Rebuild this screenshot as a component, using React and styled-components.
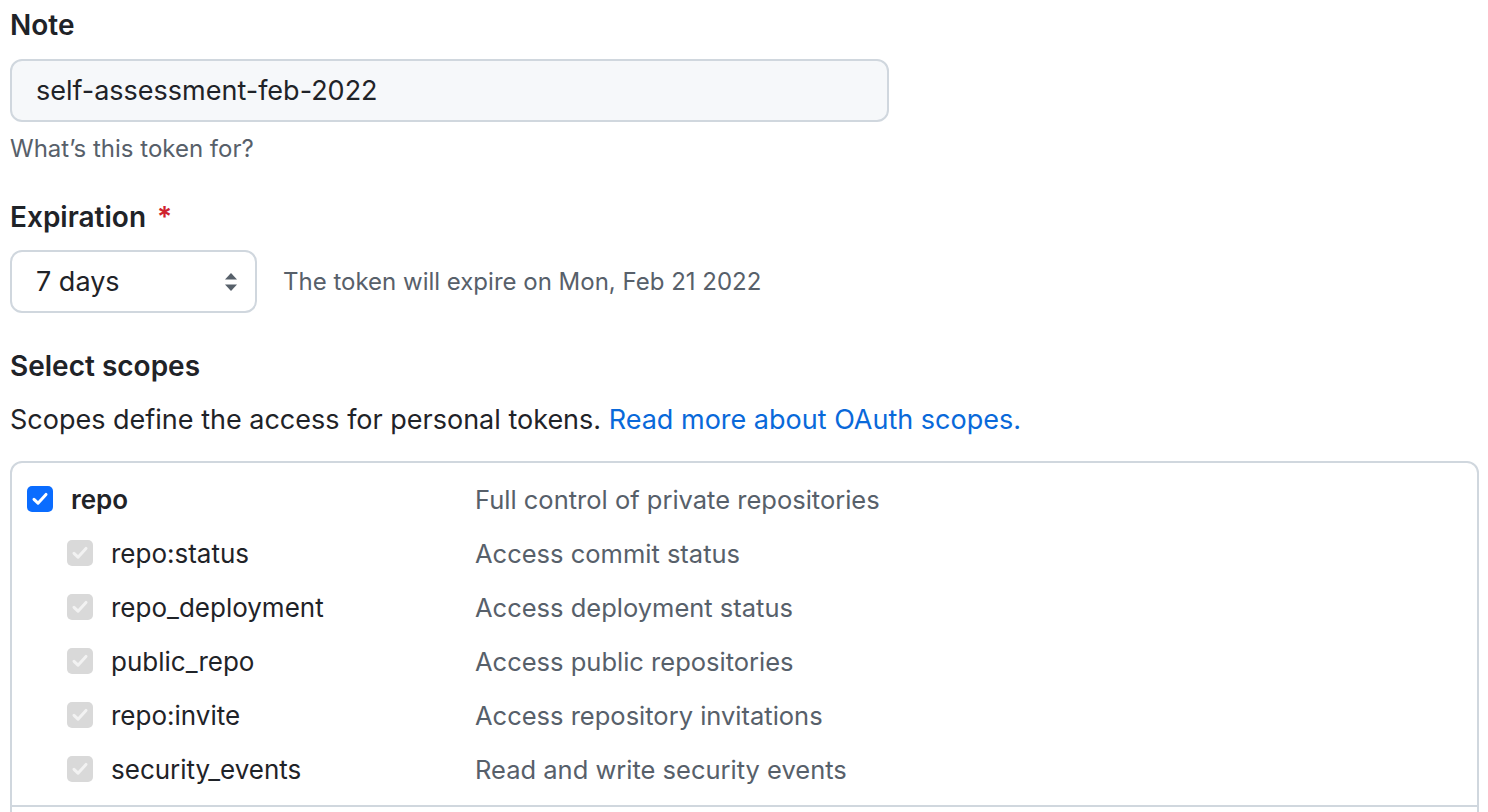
import React from 'react'
import styled, { createGlobalStyle } from 'styled-components'

const GlobalStyle = createGlobalStyle`
  html, body {
    margin: 0;
    padding: 0;
    background: #ffffff;
  }
  body {
    font-family: Inter, "Liberation Sans", Arial, sans-serif;
    color: #24292f;
  }
`

const scopes = [
  { name: 'repo:status', desc: 'Access commit status' },
  { name: 'repo_deployment', desc: 'Access deployment status' },
  { name: 'public_repo', desc: 'Access public repositories' },
  { name: 'repo:invite', desc: 'Access repository invitations' },
  { name: 'security_events', desc: 'Read and write security events' },
]

const CheckMark = ({ color }) => (
  <svg width="18" height="16" viewBox="0 0 18 16">
    <path d="M3 8.4 L7 12.2 L15 3.4" fill="none" stroke={color} strokeWidth="3" strokeLinecap="round" strokeLinejoin="round" />
  </svg>
)

const App = () => {
  return (
    <Page>
      <GlobalStyle />
      <FormGroup>
        <Label>Note</Label>
        <TextInput defaultValue="self-assessment-feb-2022" />
        <Hint>What’s this token for?</Hint>
      </FormGroup>

      <FormGroup>
        <Label>
          Expiration <Required>*</Required>
        </Label>
        <ExpirationRow>
          <Select>
            <span>7 days</span>
            <svg width="16" height="22" viewBox="0 0 16 22">
              <path d="M8 2 L14 8.5 L2 8.5 Z" fill="#57606a" />
              <path d="M8 20 L14 13.5 L2 13.5 Z" fill="#57606a" />
            </svg>
          </Select>
          <ExpireNote>The token will expire on Mon, Feb 21 2022</ExpireNote>
        </ExpirationRow>
      </FormGroup>

      <ScopesTitle>Select scopes</ScopesTitle>
      <ScopesText>
        Scopes define the access for personal tokens. <Link href="#">Read more about OAuth scopes.</Link>
      </ScopesText>

      <ScopeBox>
        <ScopeGroup>
          <ScopeRow>
            <NameCell>
              <Checkbox primary>
                <CheckMark color="#ffffff" />
              </Checkbox>
              <ScopeName primary>repo</ScopeName>
            </NameCell>
            <ScopeDesc>Full control of private repositories</ScopeDesc>
          </ScopeRow>
          {scopes.map((s) => (
            <ScopeRow key={s.name}>
              <NameCell nested>
                <Checkbox>
                  <CheckMark color="#f2f2f2" />
                </Checkbox>
                <ScopeName>{s.name}</ScopeName>
              </NameCell>
              <ScopeDesc>{s.desc}</ScopeDesc>
            </ScopeRow>
          ))}
        </ScopeGroup>
        <ScopeGroup />
      </ScopeBox>
    </Page>
  )
}

export default App

// styles
const Page = styled.div`
  padding: 0 10px;
  width: 1468px;
  height: 812px;
  overflow: hidden;
`

const FormGroup = styled.div`
  display: flex;
  flex-direction: column;
`

const Label = styled.div`
  font-size: 28px;
  font-weight: 600;
  line-height: 50px;
  height: 50px;
  color: #1f2328;
`

const Required = styled.span`
  color: #cf222e;
  margin-left: 4px;
`

const TextInput = styled.input`
  box-sizing: border-box;
  width: 879px;
  height: 63px;
  margin-top: 9px;
  padding: 0 24px;
  font-family: inherit;
  font-size: 27px;
  color: #1f2328;
  background: #f6f8fa;
  border: 2px solid #d0d7de;
  border-radius: 12px;
  outline: none;
`

const Hint = styled.div`
  font-size: 24px;
  color: #57606a;
  line-height: 34px;
  margin-top: 10px;
  margin-bottom: 26px;
`

const ExpirationRow = styled.div`
  display: flex;
  align-items: center;
  margin-top: 8px;
`

const Select = styled.div`
  box-sizing: border-box;
  width: 247px;
  height: 63px;
  padding: 0 16px 0 24px;
  display: flex;
  align-items: center;
  justify-content: space-between;
  font-size: 27px;
  color: #1f2328;
  background: #ffffff;
  border: 2px solid #d0d7de;
  border-radius: 12px;
`

const ExpireNote = styled.div`
  margin-left: 26px;
  font-size: 24px;
  color: #57606a;
`

const ScopesTitle = styled.div`
  margin-top: 28px;
  font-size: 28px;
  font-weight: 600;
  line-height: 50px;
  color: #1f2328;
`

const ScopesText = styled.div`
  margin-top: 4px;
  font-size: 27px;
  line-height: 50px;
  color: #1f2328;
`

const Link = styled.a`
  color: #0969da;
  text-decoration: none;
`

const ScopeBox = styled.div`
  margin-top: 16px;
  box-sizing: border-box;
  width: 1469px;
  border: 2px solid #d0d7de;
  border-radius: 12px;
`

const ScopeGroup = styled.div`
  padding: 9px 0 9px;
  border-bottom: 2px solid #d0d7de;
  min-height: 40px;
`

const ScopeRow = styled.div`
  display: flex;
  align-items: center;
  height: 54px;
`

const NameCell = styled.div`
  display: flex;
  align-items: center;
  width: 463px;
  padding-left: ${(p) => (p.nested ? '55px' : '15px')};
  box-sizing: border-box;
`

const Checkbox = styled.span`
  width: 26px;
  height: 26px;
  border-radius: 5px;
  display: inline-flex;
  align-items: center;
  justify-content: center;
  background: ${(p) => (p.primary ? '#0a6cff' : '#d9d9d9')};
  margin-right: 18px;
  flex-shrink: 0;
`

const ScopeName = styled.span`
  font-size: 26px;
  font-weight: ${(p) => (p.primary ? 600 : 400)};
  color: #1f2328;
`

const ScopeDesc = styled.span`
  font-size: 25.5px;
  color: #57606a;
`
